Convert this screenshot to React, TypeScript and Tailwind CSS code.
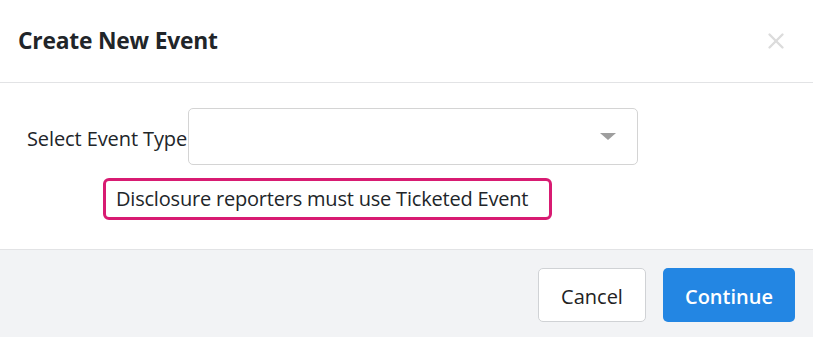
import { X } from 'lucide-react';

export default function App() {
  return (
    <div className="w-[813px] h-[337px] bg-white flex flex-col font-['Open_Sans',sans-serif] text-[#212529]">
      {/* header */}
      <div className="h-[83px] flex items-center justify-between pl-[18px] pr-[24px] border-b border-[#e2e3e5]">
        <h2 className="text-[22.8px] font-bold tracking-[-0.2px]">Create New Event</h2>
        <X className="w-[26px] h-[26px] text-[#dcdcdc]" strokeWidth={2.2} />
      </div>

      {/* body */}
      <div className="flex-1 flex flex-col pt-[25px] pl-[27px]">
        <div className="flex items-center">
          <label className="text-[20px] tracking-[-0.1px] w-[161px] whitespace-nowrap pt-[5px]">Select Event Type</label>
          <div className="w-[450px] h-[57px] border border-[#d4d4d4] rounded-[5px] flex items-center justify-end pr-[21px]">
            <div className="w-0 h-0 border-l-[8px] border-r-[8px] border-t-[7px] border-l-transparent border-r-transparent border-t-[#9e9e9e]" />
          </div>
        </div>
        <div className="mt-[13px] ml-[76px] w-[449px] h-[42px] border-[3px] border-[#d81b72] rounded-[6px] flex items-center pl-[10px]">
          <span className="text-[20px] tracking-[-0.2px] whitespace-nowrap">Disclosure reporters must use Ticketed Event</span>
        </div>
      </div>

      {/* footer */}
      <div className="h-[88px] bg-[#f2f3f5] border-t border-[#e2e3e5] flex items-center justify-end gap-[17px] pr-[18px]">
        <button className="w-[108px] h-[54px] mt-[3px] pt-[3px] bg-white border border-[#d0d2d5] rounded-[5px] text-[20px] text-[#222]">
          Cancel
        </button>
        <button className="w-[132px] h-[54px] mt-[3px] pt-[3px] bg-[#2386e3] rounded-[5px] text-[20px] font-semibold text-white">
          Continue
        </button>
      </div>
    </div>
  );
}
